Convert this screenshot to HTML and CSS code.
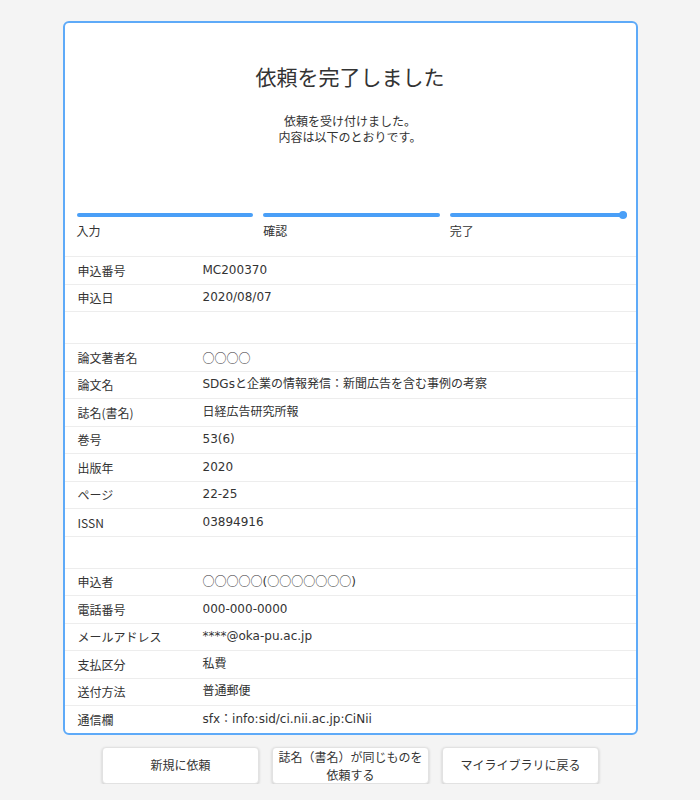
FILE: index.html
```html
<!DOCTYPE html>
<html lang="ja">
<head>
<meta charset="utf-8">
<title>依頼を完了しました</title>
<link rel="stylesheet" href="styles.css">
</head>
<body>
<main class="page">
  <section class="card">
    <header class="head">
      <h1 class="title">依頼を完了しました</h1>
      <p class="lead">依頼を受け付けました。<br>内容は以下のとおりです。</p>
    </header>
    <div class="steps">
      <div class="step"><span class="bar"></span><span class="step-label">入力</span></div>
      <div class="step"><span class="bar"></span><span class="step-label">確認</span></div>
      <div class="step"><span class="bar bar-end"></span><span class="step-label">完了</span></div>
    </div>
    <dl class="rows">
      <div class="row"><dt>申込番号</dt><dd>MC200370</dd></div>
      <div class="row"><dt>申込日</dt><dd>2020/08/07</dd></div>
      <div class="spacer"></div>
      <div class="row"><dt>論文著者名</dt><dd class="cjk">○○○○</dd></div>
      <div class="row"><dt>論文名</dt><dd>SDGsと企業の情報発信：新聞広告を含む事例の考察</dd></div>
      <div class="row"><dt>誌名(書名)</dt><dd>日経広告研究所報</dd></div>
      <div class="row"><dt>巻号</dt><dd>53(6)</dd></div>
      <div class="row"><dt>出版年</dt><dd>2020</dd></div>
      <div class="row"><dt>ページ</dt><dd>22-25</dd></div>
      <div class="row"><dt>ISSN</dt><dd>03894916</dd></div>
      <div class="spacer"></div>
      <div class="row"><dt>申込者</dt><dd><span class="cjk">○○○○○</span>(<span class="cjk">○○○○○○○</span>)</dd></div>
      <div class="row"><dt>電話番号</dt><dd>000-000-0000</dd></div>
      <div class="row"><dt>メールアドレス</dt><dd>****@oka-pu.ac.jp</dd></div>
      <div class="row"><dt>支払区分</dt><dd>私費</dd></div>
      <div class="row"><dt>送付方法</dt><dd>普通郵便</dd></div>
      <div class="row"><dt>通信欄</dt><dd>sfx：info:sid/ci.nii.ac.jp:CiNii</dd></div>
    </dl>
  </section>
  <nav class="actions">
    <button class="btn" type="button">新規に依頼</button>
    <button class="btn" type="button">誌名（書名）が同じものを<br>依頼する</button>
    <button class="btn" type="button">マイライブラリに戻る</button>
  </nav>
</main>
</body>
</html>
```

FILE: styles.css
```css
* { box-sizing: border-box; }

html, body {
  margin: 0;
  padding: 0;
  background: #f4f4f4;
}

body {
  font-family: "DejaVu Sans", "Noto Sans CJK JP", sans-serif;
  color: #333;
  font-size: 12px;
}

.page {
  padding-top: 21px;
}

.card {
  width: 575px;
  margin: 0 auto;
  background: #fff;
  border: 2px solid #5eaaf8;
  border-radius: 6px;
  overflow: hidden;
}

.head {
  padding-top: 38px;
  text-align: center;
}

.title {
  margin: 0;
  font-family: "Noto Sans CJK JP", sans-serif;
  font-weight: 400;
  font-size: 21px;
  line-height: 31px;
  color: #333;
}

.lead {
  margin: 21px 0 0;
  font-family: "Noto Sans CJK JP", sans-serif;
  font-size: 12px;
  line-height: 16px;
}

.steps {
  display: grid;
  grid-template-columns: repeat(3, 1fr);
  column-gap: 10px;
  padding: 68px 9px 0 12px;
}

.step {
  display: flex;
  flex-direction: column;
}

.bar {
  position: relative;
  display: block;
  height: 4px;
  border-radius: 2px;
  background: #4a9ff7;
}

.bar-end::after {
  content: "";
  position: absolute;
  right: 0;
  top: -2px;
  width: 8px;
  height: 8px;
  border-radius: 50%;
  background: #4a9ff7;
}

.step-label {
  margin-top: 6px;
  font-family: "Noto Sans CJK JP", sans-serif;
  line-height: 15px;
}

.rows {
  margin: 18px 0 0;
}

.row {
  display: flex;
  align-items: center;
  height: 27.5px;
  border-top: 1px solid #ededed;
  padding: 0 13px;
  line-height: 15px;
}

.row dt {
  width: 125px;
  flex: none;
  font-family: "Noto Sans CJK JP", sans-serif;
}

.row dd {
  margin: 0;
}

.cjk {
  font-family: "Noto Sans CJK JP", sans-serif;
}

.spacer {
  height: 32px;
  border-top: 1px solid #ededed;
}

.actions {
  display: flex;
  justify-content: center;
  gap: 13px;
  margin-top: 12px;
  padding-left: 1px;
}

.btn {
  width: 157px;
  height: 37px;
  padding: 0;
  background: #fff;
  border: 1px solid #e2e2e2;
  border-radius: 4px;
  box-shadow: 0 1px 3px rgba(0, 0, 0, 0.18);
  font-family: "Noto Sans CJK JP", sans-serif;
  font-size: 12px;
  line-height: 18px;
  color: #333;
}
```
